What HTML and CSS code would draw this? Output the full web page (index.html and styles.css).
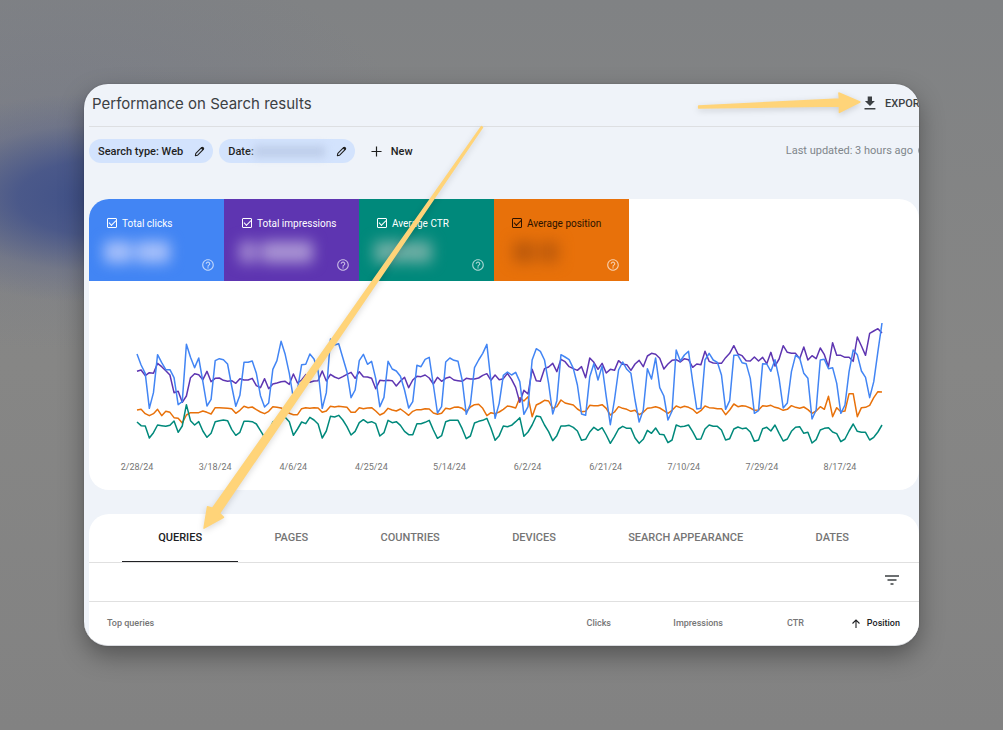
FILE: index.html
```html
<!DOCTYPE html>
<html lang="en">
<head>
<meta charset="utf-8">
<title>Performance on Search results</title>
<link rel="stylesheet" href="styles.css">
</head>
<body>
<svg class="defs" aria-hidden="true">
  <symbol id="pencil" viewBox="0 0 12 12"><path d="M1.5 10.5 L2 8 L8.2 1.8 Q9 1 9.8 1.8 L10.2 2.2 Q11 3 10.2 3.8 L4 10 Z" fill="none" stroke="currentColor" stroke-width="1.2" stroke-linejoin="round"/><path d="M7.4 2.4 L8.6 1.2 Q9.2 .9 9.8 1.4 L10.6 2.2 Q11.1 2.8 10.7 3.4 L9.5 4.6 Z" fill="currentColor"/></symbol>
  <symbol id="help" viewBox="0 0 24 24"><path fill="currentColor" d="M11 18h2v-2h-2v2zm1-16C6.48 2 2 6.48 2 12s4.48 10 10 10 10-4.480 10-10S17.520 2 12 2zm0 18c-4.410 0-8-3.590-8-8s3.590-8 8-8 8 3.590 8 8-3.590 8-8 8zm0-14c-2.210 0-4 1.790-4 4h2c0-1.100.9-2 2-2s2 .9 2 2c0 2-3 1.750-3 5h2c0-2.250 3-2.500 3-5 0-2.210-1.790-4-4-4z"/></symbol>
</svg>
<main class="frame">
  <header class="header">
    <h1 class="title">Performance on Search results</h1>
    <button class="export" type="button">
      <svg class="icon-export" viewBox="0 0 14 14" aria-hidden="true"><path fill="currentColor" d="M4.700 0.500h4.300v4.500h2.900L7 10 1.900 5h2.800zM1.500 12h10.900v1.400H1.500z"/></svg>
      <span>EXPORT</span>
    </button>
  </header>
  <div class="toolbar">
    <button class="chip" type="button"><span>Search type: Web</span><svg class="icon-pencil"><use href="#pencil"/></svg></button>
    <button class="chip" type="button"><span>Date:</span><span class="chip-mask"></span><svg class="icon-pencil"><use href="#pencil"/></svg></button>
    <button class="new" type="button"><svg class="icon-plus" viewBox="0 0 12 12" aria-hidden="true"><path d="M6 .5v11M.5 6h11" stroke="currentColor" stroke-width="1.300"/></svg><span>New</span></button>
    <p class="updated">Last updated: 3 hours ago <svg class="icon-help"><use href="#help"/></svg></p>
  </div>

  <section class="card">
    <div class="tiles">
      <div class="tile tile-clicks">
        <label class="tile-label"><input class="check" type="checkbox" checked>Total clicks</label>
        <div class="mask"><i></i><i></i></div>
        <svg class="icon-help"><use href="#help"/></svg>
      </div>
      <div class="tile tile-impressions">
        <label class="tile-label"><input class="check" type="checkbox" checked>Total impressions</label>
        <div class="mask"><i></i><i></i></div>
        <svg class="icon-help"><use href="#help"/></svg>
      </div>
      <div class="tile tile-ctr">
        <label class="tile-label"><input class="check" type="checkbox" checked>Average CTR</label>
        <div class="mask"><i></i><i></i></div>
        <svg class="icon-help"><use href="#help"/></svg>
      </div>
      <div class="tile tile-position">
        <label class="tile-label"><input class="check" type="checkbox" checked>Average position</label>
        <div class="mask"><i></i><i></i></div>
        <svg class="icon-help"><use href="#help"/></svg>
      </div>
    </div>
    <svg class="chart" viewBox="0 0 2490 450" preserveAspectRatio="none" role="img" aria-label="Clicks, impressions, CTR and position by day">
      <polyline class="line line-position" id="position"/>
      <polyline class="line line-ctr" id="ctr"/>
      <polyline class="line line-impressions" id="impressions"/>
      <polyline class="line line-clicks" id="clicks"/>
    </svg>
    <div class="axis"><span>2/28/24</span><span>3/18/24</span><span>4/6/24</span><span>4/25/24</span><span>5/14/24</span><span>6/2/24</span><span>6/21/24</span><span>7/10/24</span><span>7/29/24</span><span>8/17/24</span></div>
  </section>

  <section class="card card-table">
    <nav class="tabs">
      <button class="tab tab-active" type="button">QUERIES</button>
      <button class="tab" type="button">PAGES</button>
      <button class="tab" type="button">COUNTRIES</button>
      <button class="tab" type="button">DEVICES</button>
      <button class="tab" type="button">SEARCH APPEARANCE</button>
      <button class="tab" type="button">DATES</button>
    </nav>
    <div class="filters">
      <button class="filter" type="button" aria-label="Filter"><svg class="icon-filter" viewBox="0 0 14 10" aria-hidden="true"><path d="M0 1h14M2.500 5h9M5.500 9h3" stroke="currentColor" stroke-width="1.500"/></svg></button>
    </div>
    <table class="table">
      <thead><tr>
        <th class="col-query">Top queries</th>
        <th class="col-clicks">Clicks</th>
        <th class="col-impressions">Impressions</th>
        <th class="col-ctr">CTR</th>
        <th class="col-position"><svg class="icon-sort" viewBox="0 0 8 9" aria-hidden="true"><path d="M4 9V1M.5 4.500 4 1l3.500 3.500" fill="none" stroke="currentColor" stroke-width="1.100"/></svg>Position</th>
      </tr></thead>
    </table>
  </section>

  <svg class="arrows" viewBox="84 84 835 562" aria-hidden="true">
    <path d="M699 106 L840 99 L839.500 93 L860.500 102 L840 112.500 L840 106 L699 108 Z"/>
    <path d="M481.500 126.500 L212 509 L207 507.500 L203.500 529 L223 518 L219 514 L482.500 127.500 Z"/>
  </svg>
</main>
<script src="chart.js"></script>
</body>
</html>
```
FILE: styles.css
```css
* { box-sizing: border-box; }
body {
  margin: 0;
  padding: 84px;
  min-height: 100vh;
  font-family: Roboto, "Liberation Sans", sans-serif;
  color: #3c4043;
  background:
    radial-gradient(ellipse 220px 105px at 95px 198px, #3f5088, rgba(66, 82, 138, .85) 35%, rgba(90, 100, 140, .35) 70%, rgba(120, 120, 140, 0)),
    radial-gradient(ellipse 360px 200px at 60px 150px, rgba(105, 112, 140, .35), rgba(120, 120, 130, 0)),
    linear-gradient(#808284, #868685 50%, #828282);
}
button { margin: 0; padding: 0; border: 0; background: none; font: inherit; color: inherit; cursor: pointer; }
h1, p { margin: 0; }
svg { flex: none; }
.defs { position: absolute; width: 0; height: 0; }
.frame {
  position: relative;
  overflow: hidden;
  padding-left: 5px;
  border-radius: 24px;
  border-bottom: 1px solid #dadce0;
  background: #eff3f9;
  box-shadow: 0 10px 24px rgba(0, 0, 0, .35), 0 0 2px rgba(0, 0, 0, .2);
}
.header {
  display: flex;
  align-items: center;
  justify-content: space-between;
  height: 43px;
  margin-right: -7px;
  padding: 0 0 4px 3px;
  border-bottom: 1px solid #dddfe2;
}
.title { font: 400 15px "Google Sans", Inter, sans-serif; color: #3c4043; }
.export { display: flex; align-items: center; gap: 8px; height: 36px; font-size: 11px; font-weight: 500; color: #3c4043; }
.icon-export { width: 14px; height: 14px; }
.toolbar { display: flex; align-items: center; height: 24px; margin: 12px -13px 36px 0; font-size: 11px; font-weight: 500; color: #1f1f1f; }
.chip { display: flex; align-items: center; height: 24px; margin-right: 6px; padding: 0 8px 0 9px; border-radius: 12px; background: #d3e3fd; white-space: nowrap; }
.icon-pencil { width: 11px; height: 11px; margin-left: 11px; }
.chip-mask { width: 71px; height: 11px; background: #bccce8; filter: blur(4px); }
.new { display: flex; align-items: center; gap: 9px; margin-left: 10px; }
.icon-plus { width: 11px; height: 11px; }
.updated { display: flex; align-items: center; gap: 4px; margin-left: auto; padding-bottom: 1px; font-weight: 400; color: #80868b; white-space: nowrap; }
.updated .icon-help { width: 15px; height: 15px; }
.icon-help { width: 13px; height: 13px; }
.card { border-radius: 20px; background: #fff; overflow: hidden; }
.tiles { display: flex; }
.tile { flex: 0 1 135px; display: grid; grid-template-columns: 1fr auto; height: 82px; padding: 17px 9px 9px 15px; color: #fff; }
.tile-label { grid-column: 1 / 3; display: flex; align-items: center; gap: 5px; height: 14px; padding-left: 3px; font-size: 10px; white-space: nowrap; }
.check { appearance: none; width: 10px; height: 10px; margin: 0; border: 1px solid currentColor; border-radius: 1px; color: inherit; display: grid; place-items: center; }
.check:checked::before { content: ""; width: 6px; height: 3px; border: solid currentColor; border-width: 0 0 1px 1px; transform: translateY(-1px) rotate(-45deg); }
.tile .icon-help { align-self: end; opacity: .65; width: 14px; height: 14px; }
.tile-clicks { background: #4285f4; }
.tile-impressions { background: #5e35b1; }
.tile-ctr { background: #00897b; }
.tile-position { background: #e8710a; color: #2a1200; }
.tile-position .icon-help { color: #fff; }
.mask { display: flex; gap: 4px; height: 22px; margin: 1px 0 0; filter: blur(7px); }
.mask i { width: 28px; border-radius: 4px; background: #a5bffa; }
.mask i + i { width: 34px; }
.tile-impressions .mask i { width: 18px; background: #9f85cf; }
.tile-impressions .mask i + i { width: 52px; background: #a993d3; }
.tile-ctr .mask { gap: 0; }
.tile-ctr .mask i, .tile-ctr .mask i + i { width: 29px; background: #6daea4; }
.tile-position .mask { padding-left: 4px; }
.tile-position .mask i { width: 22px; background: #bd5a0b; }
.tile-position .mask i + i { width: 20px; background: #c15c0b; }
.chart { display: block; width: 100%; height: 150px; margin-top: 29px; }
.line { fill: none; stroke-width: 1.5px; stroke-linejoin: round; vector-effect: non-scaling-stroke; }
.line-clicks { stroke: #4285f4; }
.line-impressions { stroke: #5e35b1; }
.line-ctr { stroke: #00897b; }
.line-position { stroke: #e8710a; }
.axis { display: grid; grid-template-columns: repeat(10, 1fr); padding: 1px 40px 16px 9px; font-size: 9px; line-height: 13px; text-align: center; color: #757575; }
.card-table { margin-top: 24px; border-radius: 20px 20px 0 0; }
.tabs { display: flex; height: 49px; padding: 0 34px 0 33px; border-bottom: 1px solid #e0e0e0; }
.tab { flex: 1 1 auto; padding: 0 16px; border-bottom: 1px solid transparent; font-size: 11px; font-weight: 500; color: #757575; white-space: nowrap; }
.tab-active { color: #202124; border-bottom-color: #202124; }
.filters { display: flex; align-items: center; justify-content: flex-end; height: 39px; padding: 0 20px 4px 0; border-bottom: 1px solid #e0e0e0; }
.filter { display: flex; }
.icon-filter { width: 14px; height: 10px; }
.table { width: 100%; table-layout: fixed; border-collapse: collapse; font-size: 9px; color: #757575; }
.table th { height: 43px; padding: 0 0 2px; font-weight: 500; text-align: right; }
.table .col-query { padding-left: 18px; text-align: left; }
.col-clicks { width: 100px; }
.col-impressions { width: 112px; }
.col-ctr { width: 81px; }
.table .col-position { width: 115px; padding-right: 19px; color: #202124; }
.icon-sort { width: 8px; height: 9px; margin-right: 7px; vertical-align: -2px; }
.arrows { position: absolute; inset: 0; width: 100%; height: 100%; pointer-events: none; fill: #ffd479; stroke: #ffd479; stroke-width: 1.5px; stroke-linejoin: round; filter: drop-shadow(0 2px 3px rgba(0, 0, 0, .15)); }
```
FILE: chart.js
```js
// Daily values, top of the plot is 0; one entry for each day from 2/28/24.
const series = {
  clicks: [132,165,190,295,248,134,158,179,179,203,284,275,103,142,173,144,215,288,268,152,146,149,162,228,289,256,157,157,153,190,257,291,279,178,152,94,133,190,265,238,164,163,132,147,183,295,248,87,105,101,143,185,263,240,152,133,163,154,206,290,262,154,177,183,199,240,294,275,166,170,148,142,225,309,290,156,144,151,154,210,313,282,173,150,130,103,215,325,280,196,186,195,187,215,313,290,150,116,124,150,220,312,272,134,141,149,175,225,312,316,200,161,210,168,260,344,270,180,156,178,190,270,336,300,176,207,144,233,258,330,303,120,153,135,124,215,297,295,150,130,150,157,195,298,272,136,136,158,161,205,310,302,161,162,184,149,206,294,279,185,136,144,190,205,327,300,150,148,176,173,220,310,285,185,120,134,183,202,263,215,125,39],
  impressions: [184,180,197,188,190,160,170,182,195,248,244,277,258,203,191,194,209,184,215,205,204,211,214,212,220,206,210,210,205,227,233,206,236,222,219,215,214,223,192,219,210,194,217,213,212,183,213,193,201,206,200,193,187,205,185,200,201,205,236,211,212,211,212,228,213,202,233,210,199,200,195,204,222,202,214,205,201,210,212,214,205,207,207,204,196,191,211,195,209,206,190,208,232,277,241,252,178,212,214,176,171,160,185,148,155,170,176,181,170,203,144,157,178,160,189,178,181,152,163,164,181,162,151,170,138,130,133,145,177,162,151,149,156,146,149,172,162,164,124,154,159,160,160,143,130,107,132,137,152,153,141,153,142,161,127,168,147,107,127,130,130,146,111,150,137,146,114,134,170,98,136,136,142,142,154,81,108,136,70,63,56,69],
  position: [300,298,311,317,311,298,317,304,307,323,325,339,315,308,308,308,303,307,312,293,293,294,295,296,310,301,289,293,291,299,306,311,304,290,292,294,300,310,314,314,296,293,295,293,294,307,303,289,291,289,290,292,307,307,293,296,294,293,303,315,309,295,300,303,297,306,316,304,299,299,296,297,309,313,310,295,297,292,291,295,305,291,284,283,295,317,308,311,306,298,288,290,294,263,273,260,320,285,279,271,273,295,290,270,279,282,285,297,305,304,286,287,287,284,295,315,306,290,295,298,304,301,314,307,295,293,290,294,302,310,301,288,293,289,292,298,310,302,288,293,294,296,296,314,300,282,290,287,289,294,301,300,287,289,286,292,295,301,298,287,292,295,291,299,310,303,290,298,259,320,293,305,303,251,251,320,293,292,286,263,245,246],
  ctr: [336,347,348,384,368,345,347,349,346,333,367,348,284,332,345,335,363,382,370,335,332,330,332,358,376,367,334,334,335,342,362,382,365,336,330,322,322,335,376,357,336,341,322,330,342,384,363,319,321,316,330,350,375,364,338,329,338,335,341,378,368,331,338,335,346,364,374,374,341,341,337,331,360,385,377,335,331,331,331,356,386,378,339,334,331,325,355,391,377,348,350,346,335,323,379,366,345,318,320,345,365,392,377,348,348,346,352,363,391,388,366,352,361,353,375,400,380,357,349,355,355,384,400,388,361,370,354,373,374,398,390,345,350,349,345,365,388,387,357,345,349,349,360,390,386,357,351,356,354,366,394,390,356,352,363,345,370,393,387,364,352,350,370,367,399,389,360,355,353,366,371,395,387,363,342,364,367,367,390,382,366,345]
};
const left = 144;
const right = 2379;
for (const [name, values] of Object.entries(series)) {
  const step = (right - left) / (values.length - 1);
  const points = values.map((y, i) => `${(left + i * step).toFixed(1)},${y}`);
  document.getElementById(name).setAttribute("points", points.join(" "));
}
```
